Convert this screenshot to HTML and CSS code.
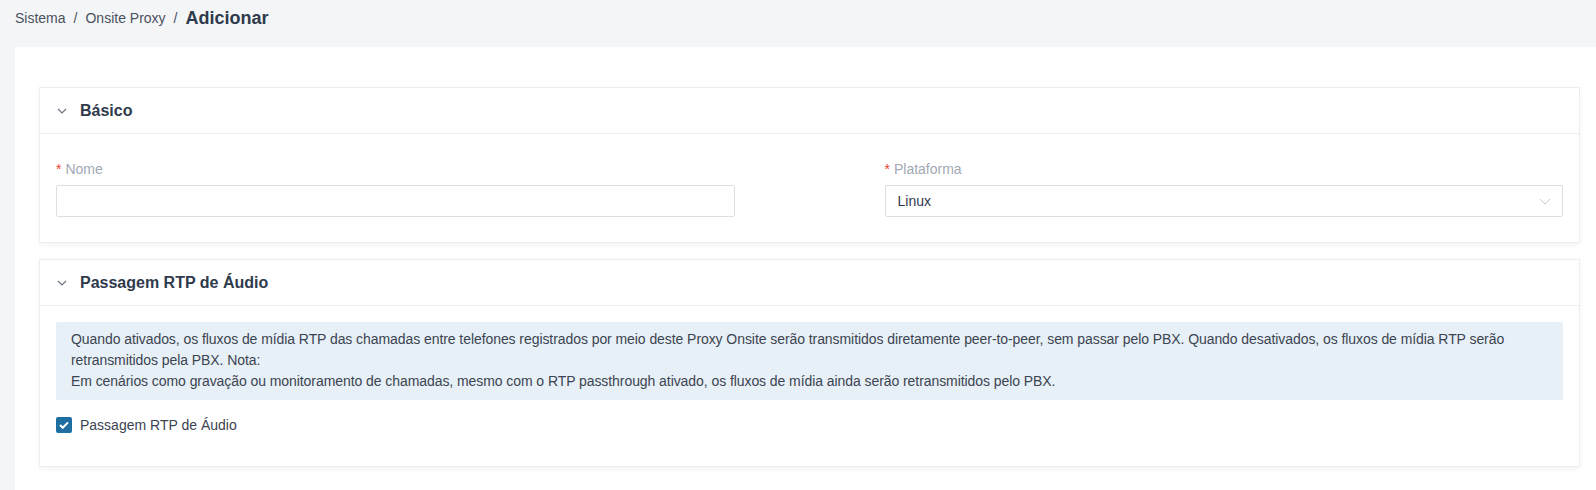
FILE: index.html
```html
<!DOCTYPE html>
<html lang="pt">
<head>
    <meta charset="UTF-8">
    <title>Adicionar - Onsite Proxy</title>
    <link rel="stylesheet" href="styles.css">
</head>
<body>
    <div class="crumbs">
        <span class="crumb">Sistema</span>
        <span class="sep">/</span>
        <span class="crumb">Onsite Proxy</span>
        <span class="sep">/</span>
        <span class="current">Adicionar</span>
    </div>

    <div class="panel">
        <div class="card">
            <div class="card-head">
                <svg class="arrow" width="10" height="6" viewBox="0 0 10 6"><path d="M1 1l4 4 4-4" fill="none" stroke="#6b7280" stroke-width="1.2"/></svg>
                <span class="card-title">Básico</span>
            </div>
            <div class="card-body">
                <div class="row">
                    <div class="field">
                        <label class="label"><i>*</i>Nome</label>
                        <div class="input"></div>
                    </div>
                    <div class="field">
                        <label class="label"><i>*</i>Plataforma</label>
                        <div class="input select">
                            <span>Linux</span>
                            <svg width="12" height="7" viewBox="0 0 12 7"><path d="M1 1l5 5 5-5" fill="none" stroke="#c8ccd2" stroke-width="1"/></svg>
                        </div>
                    </div>
                </div>
            </div>
        </div>

        <div class="card">
            <div class="card-head">
                <svg class="arrow" width="10" height="6" viewBox="0 0 10 6"><path d="M1 1l4 4 4-4" fill="none" stroke="#6b7280" stroke-width="1.2"/></svg>
                <span class="card-title">Passagem RTP de Áudio</span>
            </div>
            <div class="card-body">
                <div class="notice">
                    Quando ativados, os fluxos de mídia RTP das chamadas entre telefones registrados por meio deste Proxy Onsite serão transmitidos diretamente peer-to-peer, sem passar pelo PBX. Quando desativados, os fluxos de mídia RTP serão retransmitidos pela PBX. Nota:<br>
                    Em cenários como gravação ou monitoramento de chamadas, mesmo com o RTP passthrough ativado, os fluxos de mídia ainda serão retransmitidos pelo PBX.
                </div>
                <label class="check">
                    <span class="box">
                        <svg width="10" height="8" viewBox="0 0 10 8"><path d="M1 4l2.8 2.8L9 1.4" fill="none" stroke="#fff" stroke-width="2"/></svg>
                    </span>
                    Passagem RTP de Áudio
                </label>
            </div>
        </div>
    </div>
</body>
</html>
```

FILE: styles.css
```css
body {
    margin: 0;
    background: #f4f5f7;
    font-family: "Liberation Sans", Arial, sans-serif;
    font-size: 14px;
    color: #3c4452;
}
.crumbs {
    display: flex;
    align-items: center;
    height: 36px;
    padding: 0 15px;
    margin-bottom: 11px;
}
.crumb {
    color: #4a5160;
}
.sep {
    margin: 0 8px;
    color: #4a5160;
}
.current {
    font-size: 18px;
    font-weight: bold;
    color: #2f3a4c;
}
.panel {
    background: #fff;
    margin-left: 15px;
    padding: 40px 16px 30px 24px;
}
.card {
    background: #fff;
    border: 1px solid #eceef1;
    box-shadow: 0 2px 6px rgba(0, 0, 0, .05);
    margin-bottom: 16px;
}
.card-head {
    display: flex;
    align-items: center;
    height: 45px;
    padding: 0 17px;
    border-bottom: 1px solid #eceef1;
}
.arrow {
    margin-right: 13px;
}
.card-title {
    font-size: 16px;
    font-weight: bold;
    color: #2f3a4c;
}
.card-body {
    padding: 16px 16px 23px;
}
.row {
    display: grid;
    grid-template-columns: 1fr 1fr;
    column-gap: 150px;
    padding-top: 11px;
    padding-bottom: 2px;
}
.label {
    display: block;
    height: 17px;
    margin-bottom: 7px;
    color: #a2a9b4;
}
.label i {
    font-style: normal;
    color: #f0442c;
    margin-right: 4px;
}
.input {
    height: 30px;
    border: 1px solid #dcdfe4;
    border-radius: 2px;
}
.select {
    display: flex;
    align-items: center;
    justify-content: space-between;
    padding: 0 11px 0 12px;
    color: #2f3a4c;
}
.notice {
    background: #e7f0f6;
    border-radius: 2px;
    padding: 7px 15px 8px;
    line-height: 21px;
    letter-spacing: -0.07px;
    color: #3c4452;
}
.check {
    display: flex;
    align-items: center;
    margin-top: 17px;
    margin-bottom: 10px;
    color: #3c4452;
}
.box {
    display: flex;
    align-items: center;
    justify-content: center;
    width: 16px;
    height: 16px;
    border-radius: 2px;
    background: #1e6ea2;
    margin-right: 8px;
}
```
